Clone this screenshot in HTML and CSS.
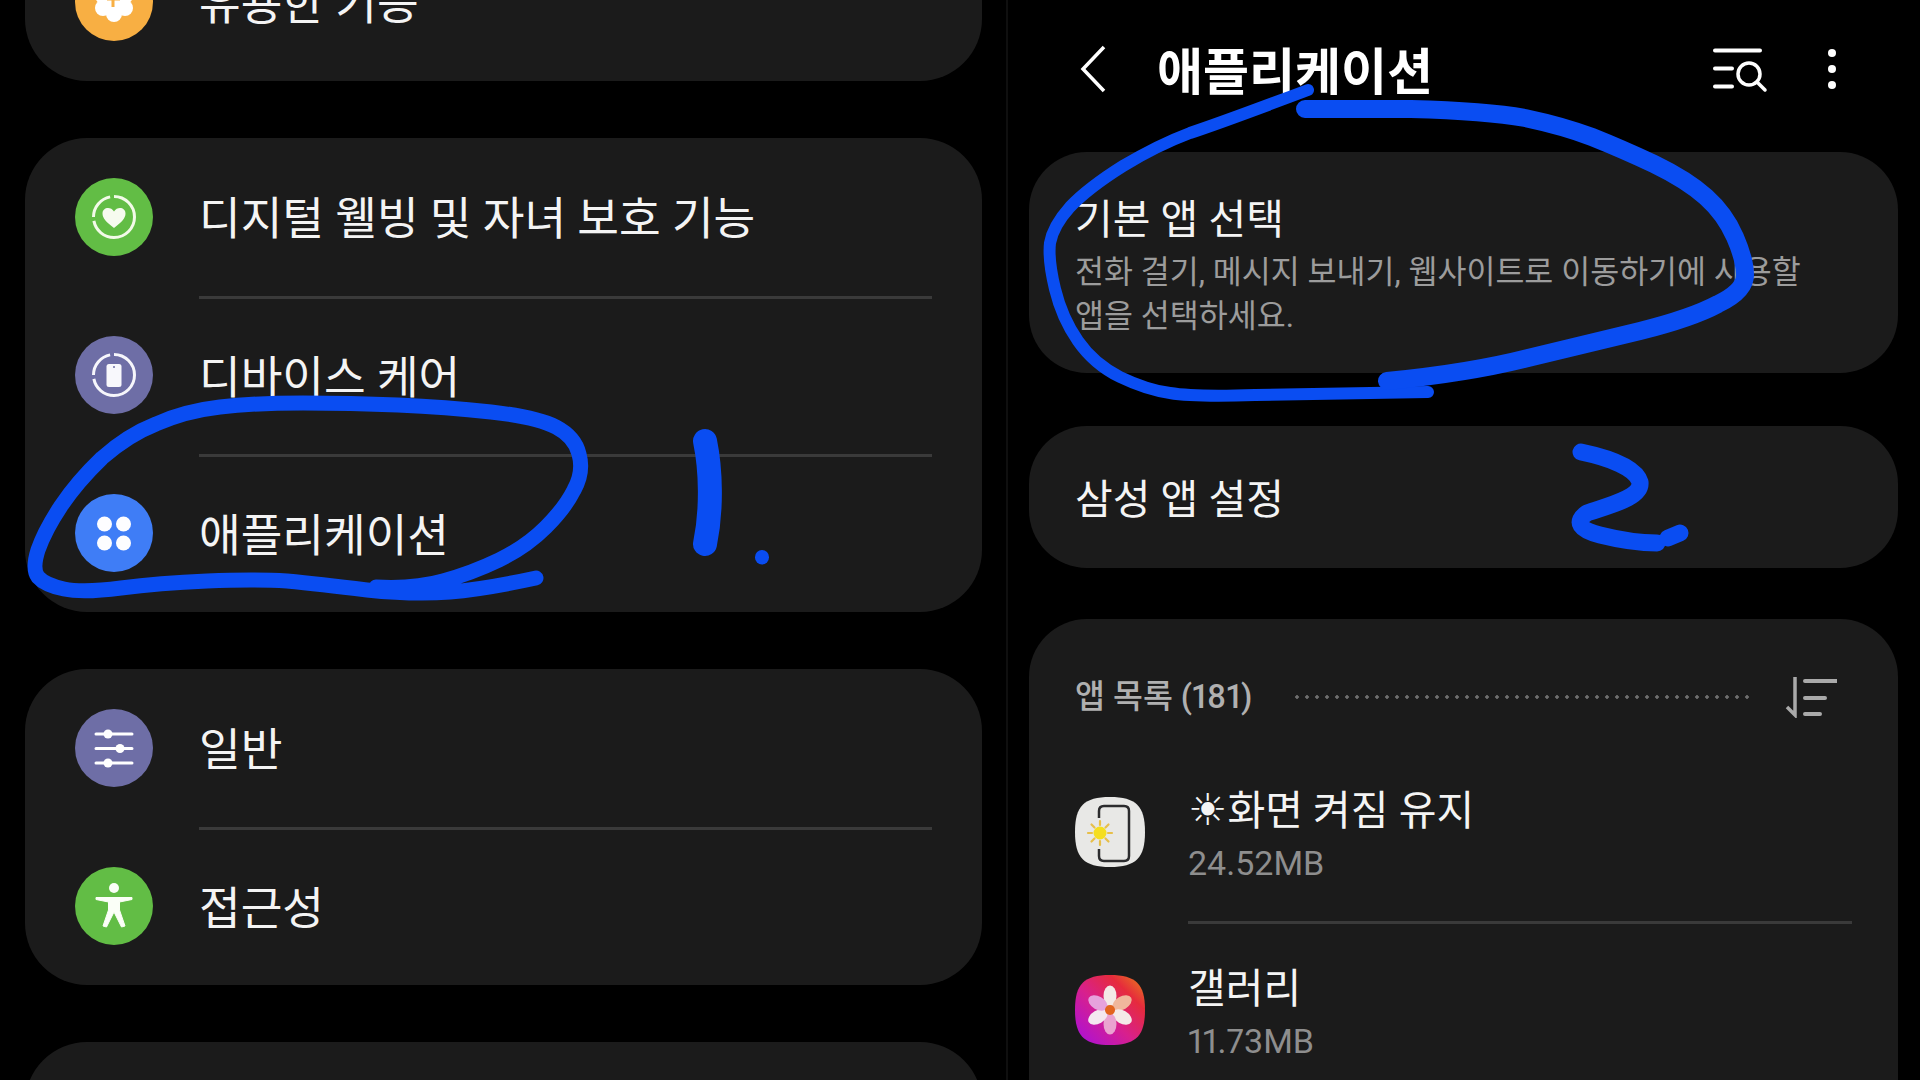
FILE: index.html
```html
<!DOCTYPE html>
<html lang="ko">
<head>
<meta charset="utf-8">
<title>애플리케이션</title>
<link rel="stylesheet" href="styles.css">
</head>
<body>
<div class="screen">
  <section class="pane-left">
    <div class="card card-clipped">
      <div class="row">
        <svg class="icon" viewBox="0 0 78 78"><circle cx="39" cy="39" r="39" fill="#f8af43"/><g fill="#fff"><circle cx="39" cy="27" r="8"/><circle cx="28" cy="33" r="8"/><circle cx="50" cy="33" r="8"/><circle cx="28" cy="45" r="8"/><circle cx="50" cy="45" r="8"/><circle cx="39" cy="51" r="8"/><circle cx="39" cy="39" r="10"/></g><path d="M38 30v14M32 36h13" stroke="#f8af43" stroke-width="3"/></svg>
        <div class="row-body"><span class="label">유용한 기능</span></div>
      </div>
    </div>
    <div class="card">
      <div class="row">
        <svg class="icon" viewBox="0 0 78 78"><circle cx="39" cy="39" r="39" fill="#62bd45"/><circle cx="39" cy="39" r="20.500" fill="none" stroke="#f2fae8" stroke-width="3" stroke-dasharray="60 4 28 4 33 0"/><path d="M39 50 C31 44 27.500 40 27.500 35.500 C27.500 29.500 35.500 28 39 33.500 C42.500 28 50.500 29.500 50.500 35.500 C50.500 40 47 44 39 50Z" fill="#f6fbef"/></svg>
        <div class="row-body"><span class="label">디지털 웰빙 및 자녀 보호 기능</span></div>
      </div>
      <div class="row">
        <svg class="icon" viewBox="0 0 78 78"><circle cx="39" cy="39" r="39" fill="#6e6ea6"/><circle cx="39" cy="39" r="20.500" fill="none" stroke="#f6f6fb" stroke-width="3" stroke-dasharray="60 4 28 4 33 0"/><rect x="31.500" y="28" width="15" height="23" rx="2.500" fill="#f8f8fc"/><circle cx="39" cy="31" r="1" fill="#6e6ea6"/></svg>
        <div class="row-body"><span class="label">디바이스 케어</span></div>
      </div>
      <div class="row">
        <svg class="icon" viewBox="0 0 78 78"><circle cx="39" cy="39" r="39" fill="#3f7df6"/><g fill="#fdfdff"><circle cx="29.500" cy="30" r="7.500"/><circle cx="48.500" cy="30" r="7.500"/><circle cx="29.500" cy="49" r="7.500"/><circle cx="48.500" cy="49" r="7.500"/></g></svg>
        <div class="row-body"><span class="label">애플리케이션</span></div>
      </div>
    </div>
    <div class="card">
      <div class="row">
        <svg class="icon" viewBox="0 0 78 78"><circle cx="39" cy="39" r="39" fill="#6e6ea6"/><path d="M21 25h36M21 39.500h36M21 54h36" stroke="#fff" stroke-width="3" stroke-linecap="round"/><g fill="#fff"><circle cx="33" cy="25" r="4.500"/><circle cx="45" cy="39.500" r="4.500"/><circle cx="33" cy="54" r="4.500"/></g></svg>
        <div class="row-body"><span class="label">일반</span></div>
      </div>
      <div class="row">
        <svg class="icon" viewBox="0 0 78 78"><circle cx="39" cy="39" r="39" fill="#62bd45"/><circle cx="39" cy="21" r="5" fill="#fbfff7"/><path d="M21 30.500 H57 V32.500 L44.500 35 L44.500 43 L50 59 L46.500 60 L39 45 L31.500 60 L28 59 L33.500 43 L33.500 35 L21 32.500Z" fill="#fbfff7" stroke="#fbfff7" stroke-width="1" stroke-linejoin="round"/></svg>
        <div class="row-body"><span class="label">접근성</span></div>
      </div>
    </div>
    <div class="card card-next"></div>
  </section>

  <section class="pane-right">
    <header class="app-bar">
      <svg class="back" viewBox="0 0 26 48"><path d="M24 2 L3 24 L24 46" fill="none" stroke="#fff" stroke-width="3.500"/></svg>
      <h1 class="page-title">애플리케이션</h1>
      <svg class="bar-search" viewBox="0 0 52 42"><path d="M1 2.500H46M1 20.500H18M1 38.500H18" stroke="#fff" stroke-width="4" stroke-linecap="round"/><circle cx="35" cy="26" r="11" fill="none" stroke="#fff" stroke-width="3.500"/><path d="M43 34 L51 42" stroke="#fff" stroke-width="3.500" stroke-linecap="round"/></svg>
      <svg class="bar-more" viewBox="0 0 10 42"><g fill="#fff"><circle cx="5" cy="5" r="4"/><circle cx="5" cy="21" r="4"/><circle cx="5" cy="37" r="4"/></g></svg>
    </header>
    <div class="panel panel-default">
      <div class="panel-title">기본 앱 선택</div>
      <div class="panel-desc">전화 걸기, 메시지 보내기, 웹사이트로 이동하기에 사용할 앱을 선택하세요.</div>
    </div>
    <div class="panel panel-samsung">
      <div class="panel-title">삼성 앱 설정</div>
    </div>
    <div class="panel panel-list">
      <div class="list-head">
        <span class="list-count">앱 목록 (181)</span>
        <span class="dots"></span>
        <svg class="sort" viewBox="0 0 52 42"><path d="M10 1V39L2 31" fill="none" stroke="#aaa" stroke-width="3.500"/><path d="M20 5H52M20 22H40M20 38H35" stroke="#aaa" stroke-width="4" stroke-linecap="round"/></svg>
      </div>
      <div class="app-row">
        <svg class="app-icon" viewBox="0 0 70 70"><path d="M35 0C61 0 70 9 70 35C70 61 61 70 35 70C9 70 0 61 0 35C0 9 9 0 35 0Z" fill="#e8e8e6"/><path d="M24 21V14Q24 9 29 9H49Q54 9 54 14V59Q54 64 49 64H29Q24 64 24 59V52" fill="none" stroke="#2c2c2e" stroke-width="2.500"/><g stroke="#e7bf4a" stroke-width="2.200" stroke-linecap="round"><path d="M25 24V28M25 44V48M13 36H17M33 36H37M16.500 27.500L19.500 30.500M33.500 27.500L30.500 30.500M16.500 44.500L19.500 41.500M33.500 44.500L30.500 41.500"/></g><circle cx="25" cy="36" r="6.500" fill="#f5de1e"/></svg>
        <div class="app-body app-body-first">
          <div class="app-name"><span class="sun">☀</span>화면 켜짐 유지</div>
          <div class="app-size">24.52MB</div>
        </div>
      </div>
      <div class="app-row">
        <svg class="app-icon" viewBox="0 0 70 70"><defs><linearGradient id="gal" x1="0" y1="1" x2="1" y2="0"><stop offset="0" stop-color="#a60fe0"/><stop offset=".45" stop-color="#d8208c"/><stop offset=".75" stop-color="#e62b3c"/><stop offset="1" stop-color="#e8861a"/></linearGradient></defs><path d="M35 0C61 0 70 9 70 35C70 61 61 70 35 70C9 70 0 61 0 35C0 9 9 0 35 0Z" fill="url(#gal)"/><g transform="translate(35 35)"><ellipse cy="-14" rx="6.500" ry="10.500" fill="#f3e9e6"/><ellipse cy="-14" rx="6.500" ry="10.500" fill="#f0b79c" transform="rotate(60)"/><ellipse cy="-14" rx="6.500" ry="10.500" fill="#f4ebe8" transform="rotate(120)"/><ellipse cy="-14" rx="6.500" ry="10.500" fill="#eaa3d0" transform="rotate(180)"/><ellipse cy="-14" rx="6.500" ry="10.500" fill="#f4e8f0" transform="rotate(240)"/><ellipse cy="-14" rx="6.500" ry="10.500" fill="#e6a2dc" transform="rotate(300)"/><circle r="5" fill="#e2651f"/></g></svg>
        <div class="app-body">
          <div class="app-name">갤러리</div>
          <div class="app-size">11.73MB</div>
        </div>
      </div>
    </div>
  </section>

  <svg class="ink" viewBox="0 0 1920 1080">
    <g fill="none" stroke="#0a4df2" stroke-linecap="round" stroke-linejoin="round">
      <path stroke-width="15" d="M536 578Q485 589 450 592Q415 595 367 590Q319 584 287 581Q255 579 207 581Q159 583 121 588Q83 593 64 589Q45 585 38 577Q32 569 38 550Q45 530 61 506Q77 482 102 458Q128 435 156 424Q185 411 220 407Q255 403 303 403Q351 403 398 405Q446 407 491 412Q536 417 556 427Q575 437 579 454Q584 472 574 490Q565 508 546 527Q526 547 499 560Q472 573 443 581Q415 589 376 587"/>
      <path stroke-width="24" d="M705 441C711 470 712 510 705 544"/>
      <path stroke-width="14" d="M762 557L762 557.500"/>
      <path stroke-width="12" d="M1308 90Q1223 122 1190 133Q1158 145 1123 166Q1088 188 1070 207Q1053 226 1050 243Q1048 260 1055 289Q1062 318 1078 341Q1094 364 1120 377Q1147 390 1170 393Q1194 397 1255 395L1428 392"/>
      <path stroke-width="18" d="M1305 109L1411 109Q1487 111 1525 118Q1563 126 1592 137Q1622 149 1654 164Q1687 180 1706 197Q1725 214 1735 237Q1745 260 1745 275Q1745 291 1718 304Q1692 318 1640 331Q1587 344 1528 358Q1469 373 1387 381"/>
      <path stroke-width="17" d="M1581 452C1610 458 1636 468 1640 482C1642 498 1610 505 1587 513C1574 522 1580 530 1600 535C1620 540 1640 543 1657 543"/>
      <path stroke-width="17" d="M1668 538L1680 533"/>
    </g>
  </svg>
</div>
</body>
</html>
```

FILE: styles.css
```css
* { box-sizing: border-box; }

html, body {
  margin: 0;
  height: 100%;
  background: #000;
}

body {
  overflow: hidden;
  font-family: "Roboto", "Noto Sans CJK KR", sans-serif;
  font-variant-numeric: proportional-nums;
  color: #f4f4f4;
}

.screen {
  position: relative;
  display: flex;
  width: 1920px;
  height: 1080px;
  overflow: hidden;
}

.pane-left {
  width: 1008px;
  padding: 0 24px 0 25px;
  display: flex;
  flex-direction: column;
  gap: 57px;
  border-right: 2px solid #0f0f0f;
  flex: none;
}

.card {
  background: #1b1b1b;
  border-radius: 62px;
  flex: none;
}

.card-clipped {
  height: 81px;
  display: flex;
  flex-direction: column;
  justify-content: flex-end;
  overflow: hidden;
  border-radius: 0 0 62px 62px;
}

.card-next {
  height: 200px;
}

.row {
  display: flex;
  align-items: center;
  gap: 46px;
  height: 158px;
  padding-left: 50px;
  flex: none;
}

.icon {
  width: 78px;
  height: 78px;
  flex: none;
}

.row-body {
  flex: 1;
  height: 100%;
  margin-right: 50px;
  padding-top: 5px;
  display: flex;
  align-items: center;
}

.row + .row .row-body {
  border-top: 3px solid #3a3a3a;
}

.label {
  font-size: 45.300px;
  line-height: 54px;
}

.pane-right {
  flex: 1;
  padding: 0 22px 0 21px;
  display: flex;
  flex-direction: column;
}

.app-bar {
  height: 152px;
  flex: none;
  display: flex;
  align-items: center;
  padding: 0 0 14px 51px;
}

.back {
  width: 26px;
  height: 48px;
  flex: none;
}

.page-title {
  margin: 7px 0 0 51px;
  flex: 1;
  font-size: 50px;
  line-height: 60px;
  font-weight: 700;
  color: #fff;
}

.bar-search {
  width: 52px;
  height: 42px;
  flex: none;
  overflow: visible;
}

.bar-more {
  width: 10px;
  height: 42px;
  flex: none;
  margin: 0 61px;
}

.panel {
  background: #1b1b1b;
  border-radius: 58px;
  padding-left: 46px;
  flex: none;
}

.panel-default {
  height: 221px;
  padding-top: 42px;
  padding-right: 90px;
}

.panel-samsung {
  height: 142px;
  margin-top: 53px;
  padding-top: 5px;
  display: flex;
  align-items: center;
}

.panel-title {
  font-size: 41px;
  line-height: 52px;
}

.panel-desc {
  margin-top: 5px;
  font-size: 31.500px;
  line-height: 44px;
  color: #9c9c9c;
}

.panel-list {
  margin-top: 51px;
  min-height: 620px;
  padding-right: 46px;
}

.list-head {
  height: 126px;
  padding-top: 30px;
  display: flex;
  align-items: center;
}

.list-count {
  font-size: 32.500px;
  line-height: 40px;
  font-weight: 500;
  color: #b0b0b0;
  flex: none;
}

.dots {
  flex: 1;
  margin: 0 36px 0 40px;
  height: 4px;
  background: radial-gradient(circle, #6e6e6e 1.500px, transparent 2px) 0 0 / 10px 4px repeat-x;
}

.sort {
  width: 52px;
  height: 42px;
  flex: none;
  margin-right: 15px;
}

.app-row {
  display: flex;
  align-items: center;
  gap: 43px;
  height: 178px;
  padding-bottom: 4px;
}

.app-icon {
  width: 70px;
  height: 70px;
  flex: none;
}

.app-body {
  flex: 1;
  height: 178px;
  padding-top: 4px;
  display: flex;
  flex-direction: column;
  justify-content: center;
}

.app-body-first {
  padding-top: 8px;
}

.app-row + .app-row .app-body {
  border-top: 3px solid #3a3a3a;
}

.app-name {
  font-size: 41px;
  line-height: 50px;
  white-space: nowrap;
}

.sun {
  font-family: "DejaVu Sans", sans-serif;
  font-size: 44px;
  line-height: 1;
}

.app-size {
  margin-top: 4px;
  font-size: 34px;
  line-height: 46px;
  color: #8e8e8e;
}

.ink {
  position: absolute;
  inset: 0;
  width: 1920px;
  height: 1080px;
  pointer-events: none;
}
```
